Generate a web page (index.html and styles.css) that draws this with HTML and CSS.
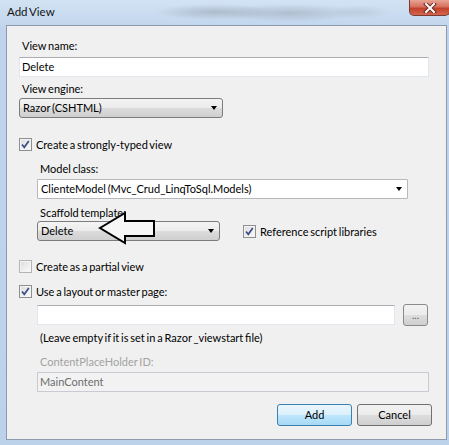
FILE: index.html
```html
<!DOCTYPE html>
<html lang="en">
<head>
  <meta charset="UTF-8" />
  <title>Add View</title>
  <link rel="stylesheet" href="styles.css">
</head>
<body>
  <div class="window">
    <div class="titlebar">
      <span class="title">Add View</span>
      <div class="close-btn">
        <svg width="14" height="10" viewBox="0 0 14 10">
          <path d="M3 1 L11 9 M11 1 L3 9" stroke="#6b2a22" stroke-width="4" stroke-linecap="square"/>
          <path d="M3 1 L11 9 M11 1 L3 9" stroke="#ffffff" stroke-width="2" stroke-linecap="square"/>
        </svg>
      </div>
    </div>

    <div class="client">
      <div class="label">View name:</div>
      <div class="textbox full">Delete</div>

      <div class="label gap-4">View engine:</div>
      <div class="combo engine">Razor (CSHTML)<span class="arrow"></span></div>

      <div class="check-row strong-row">
        <span class="checkbox checked"></span>
        <span>Create a strongly-typed view</span>
      </div>

      <div class="indent">
        <div class="label model-label">Model class:</div>
        <div class="combo combo-white model">ClienteModel (Mvc_Crud_LinqToSql.Models)<span class="arrow"></span></div>

        <div class="label scaffold-label">Scaffold template:</div>
        <div class="scaffold-row">
          <div class="combo scaffold">Delete<span class="arrow"></span></div>
          <div class="check-row">
            <span class="checkbox checked"></span>
            <span>Reference script libraries</span>
          </div>
          <svg class="pointer" width="60" height="36" viewBox="0 0 60 36">
            <polygon points="2,17 27,2 27,10 56,10 56,25 27,25 27,32" fill="#f6f6f6" stroke="#000" stroke-width="2" stroke-linejoin="miter"/>
          </svg>
        </div>
      </div>

      <div class="check-row partial-row">
        <span class="checkbox"></span>
        <span>Create as a partial view</span>
      </div>

      <div class="check-row layout-row">
        <span class="checkbox checked"></span>
        <span>Use a layout or master page:</span>
      </div>

      <div class="indent">
        <div class="browse-row">
          <div class="textbox layout-input"></div>
          <div class="browse-btn">...</div>
        </div>
        <div class="label hint">(Leave empty if it is set in a Razor _viewstart file)</div>
        <div class="label disabled placeholder-label">ContentPlaceHolder ID:</div>
        <div class="textbox disabled-box">MainContent</div>
      </div>

      <div class="buttons">
        <div class="btn default">Add</div>
        <div class="btn">Cancel</div>
      </div>
    </div>
  </div>
</body>
</html>
```

FILE: styles.css
```css
body {
  margin: 0;
  font-family: Lato, "Noto Sans", sans-serif;
  font-size: 11px;
  word-spacing: -1px;
  color: #000;
}
.window {
  width: 449px;
  height: 445px;
  box-sizing: border-box;
  background:
    radial-gradient(ellipse 60px 8px at 215px 12px, rgba(150,160,175,0.55), transparent),
    radial-gradient(ellipse 70px 9px at 290px 13px, rgba(150,160,175,0.5), transparent),
    radial-gradient(ellipse 30px 7px at 360px 12px, rgba(170,180,195,0.4), transparent),
    linear-gradient(#d3e3f4, #bfd4ec 30px, #bcd2eb);
  display: flex;
  flex-direction: column;
}
.titlebar {
  height: 25px;
  display: flex;
  align-items: flex-start;
  justify-content: space-between;
}
.title {
  margin: 4px 0 0 7px;
  line-height: 16px;
  font-size: 11.5px;
  color: #111;
}
.close-btn {
  width: 41px;
  height: 16px;
  margin-right: -1px;
  box-sizing: border-box;
  border: 1px solid #7a3b33;
  border-top: none;
  border-radius: 0 0 5px 5px;
  background: linear-gradient(#e9a595, #d7705f 45%, #c2412c 55%, #d4664f);
  display: flex;
  align-items: center;
  justify-content: center;
}
.client {
  height: 415px;
  margin: 0 2px 0 6px;
  box-sizing: border-box;
  border: 1px solid #8c9aab;
  background: #f0f0f0;
  padding: 12px 17px 0 12px;
}
.label {
  height: 15px;
  line-height: 15px;
  padding-left: 3px;
  white-space: nowrap;
}
.gap-4 {
  margin-top: 4px;
}
.textbox {
  height: 20px;
  box-sizing: border-box;
  background: #fff;
  border: 1px solid #e1e6ec;
  border-top-color: #abadb3;
  line-height: 18px;
  padding-left: 2px;
  margin-top: 4px;
}
.full {
  width: 410px;
}
.combo {
  position: relative;
  height: 20px;
  box-sizing: border-box;
  border: 1px solid #7c7c7c;
  border-radius: 3px;
  background: linear-gradient(#f4f4f4, #ebebeb 50%, #dcdcdc 51%, #cfcfcf);
  line-height: 18px;
  padding-left: 3px;
  white-space: nowrap;
}
.combo-white {
  background: #fff;
  border-color: #b5b8bd;
  border-radius: 1px;
}
.arrow {
  position: absolute;
  right: 5px;
  top: 7px;
  border-left: 3.5px solid transparent;
  border-right: 3.5px solid transparent;
  border-top: 4px solid #000;
}
.engine {
  width: 204px;
  margin-top: 2px;
}
.check-row {
  display: flex;
  align-items: center;
  height: 15px;
  white-space: nowrap;
}
.checkbox {
  width: 13px;
  height: 13px;
  box-sizing: border-box;
  border: 1px solid #8e8f8f;
  background: linear-gradient(135deg, #dcdcdc, #fbfbfb);
  box-shadow: inset 0 0 0 1px #f4f4f4;
  margin-right: 4px;
  flex-shrink: 0;
}
.checkbox.checked {
  background:
    url("data:image/svg+xml,%3Csvg xmlns='http://www.w3.org/2000/svg' width='11' height='11'%3E%3Cpath d='M2 5.5 L4.3 8.3 L8.8 2' fill='none' stroke='%23384f86' stroke-width='1.7'/%3E%3C/svg%3E") no-repeat center,
    linear-gradient(135deg, #dcdcdc, #fbfbfb);
}
.strong-row {
  margin-top: 19px;
}
.indent {
  padding-left: 18px;
}
.model-label {
  margin-top: 9px;
}
.model {
  width: 371px;
  margin-top: 3px;
}
.scaffold-label {
  margin-top: 6px;
}
.scaffold-row {
  position: relative;
  display: flex;
  align-items: center;
  margin-top: 1px;
}
.scaffold {
  width: 183px;
  margin-right: 23px;
}
.pointer {
  position: absolute;
  left: 61px;
  top: -10px;
}
.partial-row {
  margin-top: 18px;
}
.partial-row .checkbox {
  border-color: #b4b4b4;
}
.layout-row {
  margin-top: 10px;
}
.browse-row {
  display: flex;
  align-items: center;
  height: 22px;
  margin-top: 5px;
}
.layout-input {
  width: 358px;
  margin-top: 0;
  margin-right: 8px;
}
.browse-btn {
  width: 25px;
  height: 22px;
  box-sizing: border-box;
  border: 1px solid #8a8a8a;
  border-radius: 3px;
  background: linear-gradient(#f2f2f2, #ebebeb 50%, #dddddd 51%, #cfcfcf);
  color: #555;
  font-size: 10px;
  text-align: center;
  line-height: 20px;
}
.hint {
  margin-top: 4px;
}
.disabled {
  color: #a3a3a3;
}
.placeholder-label {
  margin-top: 9px;
}
.disabled-box {
  width: 392px;
  margin-top: 3px;
  background: #f2f2f2;
  border-color: #c8ccd2;
  color: #6d6d6d;
}
.buttons {
  display: flex;
  justify-content: flex-end;
  gap: 5px;
  margin-top: 12px;
  margin-right: -3px;
}
.btn {
  width: 75px;
  height: 22px;
  box-sizing: border-box;
  border: 1px solid #707070;
  border-radius: 3px;
  background: linear-gradient(#f2f2f2, #ebebeb 50%, #dddddd 51%, #cfcfcf);
  text-align: center;
  line-height: 20px;
}
.btn.default {
  border-color: #3c7fb1;
  background: linear-gradient(#eaf6fd, #d9f0fc 50%, #bee6fd 51%, #a7d9f5);
}
```
